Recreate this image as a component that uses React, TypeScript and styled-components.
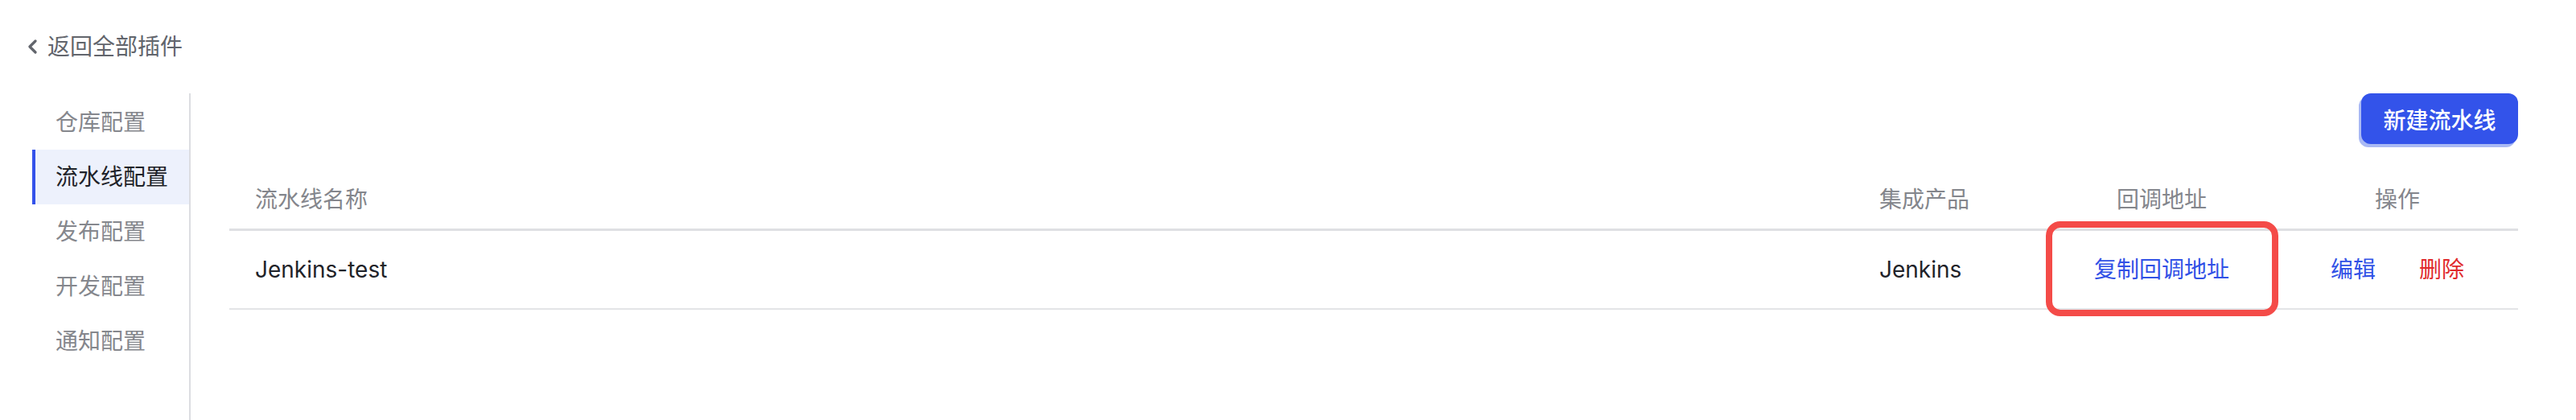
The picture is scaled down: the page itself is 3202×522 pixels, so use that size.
import React from 'react';
import styled, { createGlobalStyle } from 'styled-components';

const GlobalStyle = createGlobalStyle`
  html, body {
    margin: 0;
    padding: 0;
    background: #ffffff;
  }
  body {
    font-family: Inter, "Noto Sans CJK SC", sans-serif;
    color: #1f2329;
  }
`;

// Page shell: back link on top, sidebar + content below
const Page = styled.div`
  min-height: 100vh;
  display: flex;
  flex-direction: column;
`;

const BackBar = styled.div`
  display: flex;
  align-items: center;
  gap: 12px;
  padding: 38px 0 0 33px;
  height: 40px;
  font-size: 28px;
  line-height: 40px;
  color: #62656c;
`;

const Body = styled.div`
  flex: 1;
  display: flex;
  margin-top: 38px;
  padding-left: 40px;
`;

const Sidebar = styled.nav`
  width: 195px;
  border-right: 2px solid #dcdde1;
  padding-top: 2px;
`;

const NavItem = styled.div<{ $active?: boolean }>`
  height: 68px;
  line-height: 68px;
  font-size: 28px;
  padding-left: 25px;
  border-left: 4px solid ${(p) => (p.$active ? '#3452ea' : 'transparent')};
  background: ${(p) => (p.$active ? '#edf1fc' : 'transparent')};
  color: ${(p) => (p.$active ? '#1f2329' : '#85878d')};
`;

const Content = styled.main`
  flex: 1;
  padding: 0 72px 0 48px;
`;

const Toolbar = styled.div`
  display: flex;
  justify-content: flex-end;
  margin-bottom: 33px;
`;

const PrimaryButton = styled.button`
  width: 195px;
  height: 63px;
  border: none;
  border-radius: 12px;
  background: #3353ea;
  color: #ffffff;
  font-family: inherit;
  font-size: 28px;
  font-weight: 500;
  box-shadow: -3px 4px 0 #a9b9f4;
`;

const Row = styled.div<{ $head?: boolean }>`
  display: grid;
  grid-template-columns: 1fr 240px 286px 300px;
  border-bottom: ${(p) => (p.$head ? '3px solid #dfe0e3' : '2px solid #e3e4e7')};
  color: ${(p) => (p.$head ? '#84868c' : '#1f2329')};
`;

const Cell = styled.div<{ $center?: boolean; $head?: boolean }>`
  position: relative;
  padding: ${(p) => (p.$head ? '16px 32px' : '28px 32px')};
  font-size: 28px;
  line-height: 40px;
  text-align: ${(p) => (p.$center ? 'center' : 'left')};
  display: flex;
  justify-content: ${(p) => (p.$center ? 'center' : 'flex-start')};
  gap: 54px;
`;

const Link = styled.span<{ $danger?: boolean }>`
  color: ${(p) => (p.$danger ? '#e02a2b' : '#3151e6')};
  cursor: pointer;
`;

// red annotation frame drawn over the callback cell
const Highlight = styled.div`
  position: absolute;
  top: -12px;
  bottom: -10px;
  left: -1px;
  right: -2px;
  border: 8px solid #f44b48;
  border-radius: 18px;
  pointer-events: none;
`;

const Chevron = () => (
  <svg width="14" height="18" viewBox="0 0 14 18" fill="none">
    <polyline points="11,2 4,9 11,16" stroke="#62656c" strokeWidth="3.2" strokeLinecap="round" strokeLinejoin="round" />
  </svg>
);

const navItems = ['仓库配置', '流水线配置', '发布配置', '开发配置', '通知配置'];

export default function App() {
  return (
    <Page>
      <GlobalStyle />
      <BackBar>
        <Chevron />
        <span>返回全部插件</span>
      </BackBar>
      <Body>
        <Sidebar>
          {navItems.map((item) => (
            <NavItem key={item} $active={item === '流水线配置'}>
              {item}
            </NavItem>
          ))}
        </Sidebar>
        <Content>
          <Toolbar>
            <PrimaryButton>新建流水线</PrimaryButton>
          </Toolbar>
          <Row $head>
            <Cell $head>流水线名称</Cell>
            <Cell $head>集成产品</Cell>
            <Cell $head $center>回调地址</Cell>
            <Cell $head $center>操作</Cell>
          </Row>
          <Row>
            <Cell>Jenkins-test</Cell>
            <Cell>Jenkins</Cell>
            <Cell $center>
              <Link>复制回调地址</Link>
              <Highlight />
            </Cell>
            <Cell $center>
              <Link>编辑</Link>
              <Link $danger>删除</Link>
            </Cell>
          </Row>
        </Content>
      </Body>
    </Page>
  );
}
